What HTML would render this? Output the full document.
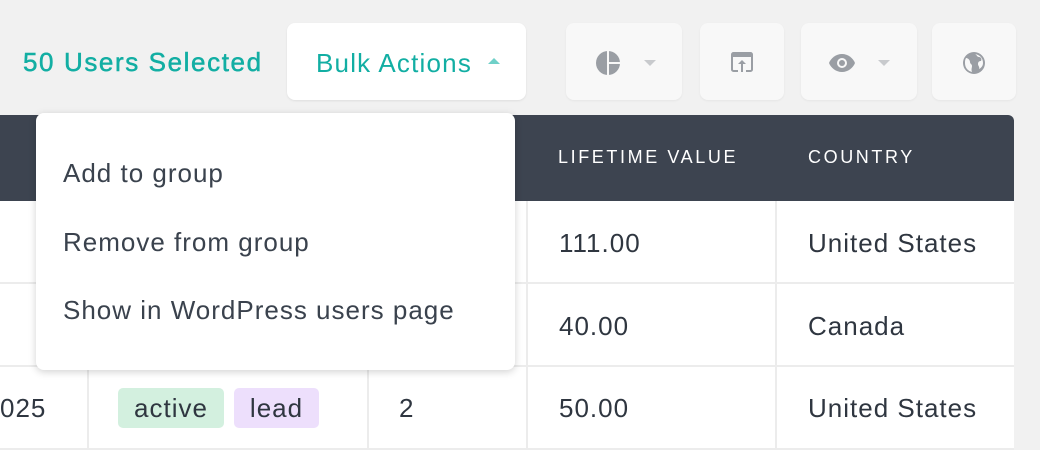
<!DOCTYPE html>
<html><head><meta charset="utf-8"><style>
body{margin:0;width:1040px;height:450px;background:#f1f1f1;font-family:"Liberation Sans",sans-serif;position:relative;overflow:hidden}
.abs{position:absolute}
.sel{left:23px;top:47px;font-size:26px;color:#12aea3;letter-spacing:1.6px;-webkit-text-stroke:0.5px #12aea3}
.bulk{left:287px;top:23px;width:239px;height:77px;background:#fff;border-radius:8px;box-shadow:0 1px 2px rgba(0,0,0,.08)}
.bulk span{position:absolute;left:29px;top:25px;font-size:26px;letter-spacing:1.2px;color:#12aea3}
.tb{top:23px;height:77px;background:#f8f8f8;border-radius:8px;box-shadow:0 1px 2px rgba(0,0,0,.05)}
.caret{position:absolute;width:0;height:0;border-left:6px solid transparent;border-right:6px solid transparent}
.table{left:0;top:115px;width:1014px;height:335px;background:#fff;border-top-right-radius:6px;overflow:hidden}
.head{position:absolute;left:0;top:0;width:1014px;height:86px;background:#3d4450}
.th{position:absolute;top:32px;color:#fff;font-size:18px;letter-spacing:2.6px}
.vl{position:absolute;top:86px;width:2px;height:250px;background:#ececec}
.hl{position:absolute;left:0;width:1014px;height:2px;background:#ececec}
.td{position:absolute;font-size:26px;letter-spacing:1px;color:#2f3640}
.tag{position:absolute;top:273px;height:40px;border-radius:5px;font-size:26px;letter-spacing:1px;color:#2f3640;line-height:40px;text-align:center}
.menu{left:36px;top:113px;width:479px;height:257px;background:#fff;border-radius:8px;box-shadow:0 2px 8px rgba(0,0,0,.18)}
.mi{position:absolute;left:27px;font-size:26px;letter-spacing:1px;color:#3a424d}
</style></head><body>
<div class="abs sel">50 Users Selected</div>
<div class="abs bulk"><span>Bulk Actions</span><div class="caret" style="left:201px;top:35px;border-bottom:6px solid #6fd0c8"></div></div>

<div class="abs tb" style="left:566px;width:116px">
<svg class="abs" style="left:30px;top:28px" width="24" height="24" viewBox="0 0 24 24"><circle cx="12" cy="12" r="12" fill="#9a9ea4"/><rect x="11" y="0" width="2" height="24" fill="#f8f8f8"/><rect x="12" y="11" width="12" height="2" fill="#f8f8f8"/></svg>
<div class="caret" style="left:78px;top:37px;border-top:6px solid #c8cacd"></div></div>

<div class="abs tb" style="left:700px;width:84px">
<svg class="abs" style="left:31px;top:29px" width="22" height="20" viewBox="0 0 22 20"><rect x="1" y="1" width="20" height="18" rx="1.5" fill="none" stroke="#9a9ea4" stroke-width="2"/><rect x="1" y="1" width="20" height="4" fill="#9a9ea4"/><rect x="7" y="17" width="8" height="3" fill="#f8f8f8"/><path d="M11 8l-4 4h3v8h2v-8h3z" fill="#9a9ea4"/></svg></div>

<div class="abs tb" style="left:801px;width:116px">
<svg class="abs" style="left:28px;top:31px" width="26" height="18" viewBox="0 0 26 18"><path d="M13 0C7 0 2 4 0 9c2 5 7 9 13 9s11-4 13-9C24 4 19 0 13 0z" fill="#9a9ea4"/><circle cx="13" cy="9" r="5" fill="#f8f8f8"/><circle cx="13" cy="9" r="3" fill="#9a9ea4"/></svg>
<div class="caret" style="left:77px;top:37px;border-top:6px solid #c8cacd"></div></div>

<div class="abs tb" style="left:932px;width:84px">
<svg class="abs" style="left:30px;top:28px" width="24" height="24" viewBox="0 0 24 24"><circle cx="12" cy="12" r="11" fill="#9a9ea4"/><path d="M4 7c2 0 4 2 4 4s2 2 2 4-1 3 0 6c-4-1-7-4-7-9 0-2 0-3 1-5zM13 3c2 1 2 3 4 3s3 2 2 4c-2 0-3 1-3 3s2 3 1 5c2-1 4-3 4-6 0-5-3-8-8-9z" fill="#f8f8f8"/></svg></div>

<div class="abs table">
<div class="head"></div>
<div class="th" style="left:558px">LIFETIME VALUE</div>
<div class="th" style="left:808px">COUNTRY</div>
<div class="vl" style="left:87px"></div><div class="vl" style="left:367px"></div><div class="vl" style="left:526px"></div><div class="vl" style="left:775px"></div>
<div class="hl" style="top:167px"></div><div class="hl" style="top:250px"></div><div class="hl" style="top:333px"></div>
<div class="td" style="left:559px;top:113px">111.00</div>
<div class="td" style="left:808px;top:113px">United States</div>
<div class="td" style="left:559px;top:196px">40.00</div>
<div class="td" style="left:808px;top:196px">Canada</div>
<div class="td" style="left:0px;top:278px">025</div>
<div class="td" style="left:399px;top:278px">2</div>
<div class="td" style="left:559px;top:278px">50.00</div>
<div class="td" style="left:808px;top:278px">United States</div>
<div class="tag" style="left:118px;width:106px;background:#d3f0df">active</div>
<div class="tag" style="left:234px;width:85px;background:#eddffc">lead</div>
</div>

<div class="abs menu">
<div class="mi" style="top:45px">Add to group</div>
<div class="mi" style="top:114px">Remove from group</div>
<div class="mi" style="top:182px">Show in WordPress users page</div>
</div>
</body></html>
